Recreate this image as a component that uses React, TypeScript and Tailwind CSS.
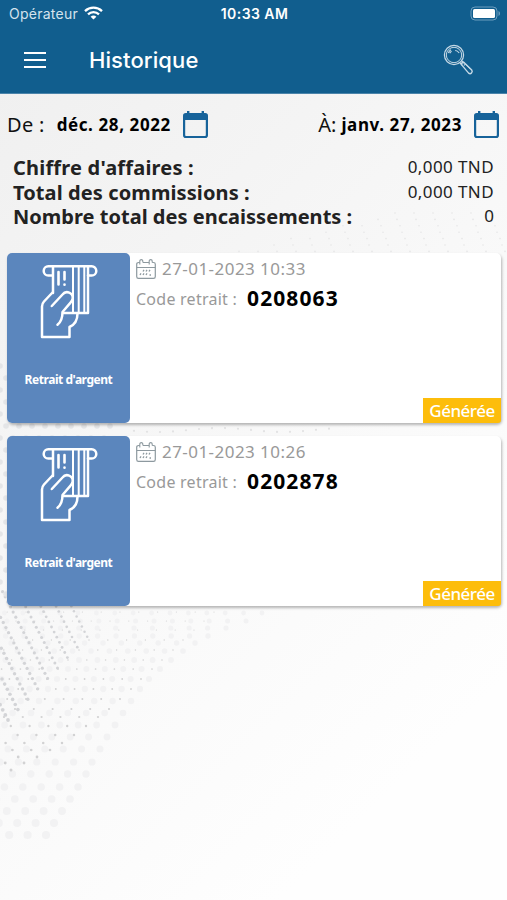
import type { ReactNode } from "react"

interface Withdrawal {
  date: string
  code: string
  status: string
}

const withdrawals: Withdrawal[] = [
  { date: "27-01-2023 10:33", code: "0208063", status: "Générée" },
  { date: "27-01-2023 10:26", code: "0202878", status: "Générée" },
]

interface Dot {
  x: number
  y: number
  r: number
  fill: string
}

// Right-hand end of every halftone row, from the bottom up
const largeEdge = [
  [46, 835], [54, 823], [62, 811], [70, 799], [78, 787], [86, 774], [92, 762],
  [100, 749], [107, 737], [115, 725], [123, 713], [131, 701], [140, 689], [149, 679],
  [160, 669], [171, 660], [183, 651], [195, 643], [208, 636], [226, 628], [246, 621], [262, 613],
]

const smallEdge = [
  [11, 770], [24, 763], [37, 757], [50, 750], [62, 743], [74, 735], [86, 726],
  [98, 717], [109, 709], [120, 699], [131, 689], [141, 679], [152, 669], [162, 660],
  [173, 650], [183, 640], [194, 630], [204, 621], [214, 612],
]

function buildDots(): Dot[] {
  const dots: Dot[] = []

  largeEdge.forEach(([edge, y], row) => {
    for (let x = edge; x > -4; x -= 18.4) {
      dots.push({ x, y, r: 4.1 - row * 0.08, fill: "#f2f2f3" })
    }
  })

  smallEdge.forEach(([edge, y], row) => {
    for (let x = edge; x > 0; x -= 18.8) {
      dots.push({ x, y, r: Math.max(0.6, 1.5 - row * 0.055), fill: "#d2d2d3" })
    }
  })

  // dense strings of dots on the left edge
  for (let line = 0; line < 9; line++) {
    const endX = 8 + line * 9.9
    const endY = 720 - line * 10.4
    for (let i = 0; i < 30; i++) {
      const x = endX - i * 2.65
      const y = endY - i * 5.1
      if (x > 0 && y > 590) {
        dots.push({ x, y, r: 1.9 - line * 0.08, fill: "#d3d4d7" })
      }
    }
  }

  // faint dots at the left of the cards
  for (let row = 0; row < 20; row++) {
    const y = 366 + row * 12
    for (let x = (row % 2) * 6; x < 128 - row * 2; x += 13) {
      dots.push({ x, y, r: 2.8, fill: "#e4e5e7" })
    }
  }

  // wave on the right, behind the totals
  for (let row = 0; row < 7; row++) {
    const y = 213 + row * 6.4
    for (let x = 395 - row * 26; x < 507; x += 19) {
      dots.push({ x: x + (row % 2) * 9, y, r: 0.8, fill: "#e6e6e7" })
    }
  }

  for (let x = 134; x < 340; x += 13) {
    dots.push({ x, y: 430 + Math.sin(x / 20) * 2, r: 1.1, fill: "#e2e2e3" })
  }

  return dots
}

const dots = buildDots()

function Backdrop() {
  return (
    <svg className="absolute inset-0 -z-10" width="507" height="900" viewBox="0 0 507 900" aria-hidden="true">
      <defs>
        <linearGradient id="page" x1="0" y1="0" x2="0.55" y2="1">
          <stop offset="0" stopColor="#efefef" />
          <stop offset="0.35" stopColor="#f4f4f4" />
          <stop offset="0.7" stopColor="#fafafa" />
          <stop offset="1" stopColor="#fefefe" />
        </linearGradient>
      </defs>
      <rect width="507" height="900" fill="url(#page)" />
      {dots.map((dot, i) => (
        <circle key={i} cx={dot.x} cy={dot.y} r={dot.r} fill={dot.fill} />
      ))}
    </svg>
  )
}

function StatusBar() {
  return (
    <div className="grid h-[26px] grid-cols-[1fr_auto_1fr] items-center pl-[9px] pr-[7px] font-['Inter',sans-serif] text-[14px] text-white">
      <div className="flex items-center gap-[6px]">
        <span className="tracking-[0.25px] text-[#d5e3ed]">Opérateur</span>
        <svg width="19" height="14" viewBox="0 0 19 14" fill="none" stroke="white" strokeWidth="2.3">
          <path d="M1 5.1C5.8.5 13.2.5 18 5.1" />
          <path d="M4 8.3c3.1-3 7.9-3 11 0" />
          <path d="M9.5 13.5 6.6 10.7c1.6-1.5 4.2-1.5 5.8 0Z" fill="white" stroke="none" />
        </svg>
      </div>
      <span className="whitespace-nowrap font-semibold tracking-[0.45px]">10:33 AM</span>
      <svg className="justify-self-end" width="30" height="15" viewBox="0 0 30 15">
        <rect x="1" y="1" width="26" height="13" rx="4" fill="none" stroke="#6d9dbe" />
        <rect x="3" y="3" width="22" height="9" rx="1.5" fill="white" />
        <path d="M28.5 5v5c2-.7 2-4.3 0-5Z" fill="#6d9dbe" />
      </svg>
    </div>
  )
}

function SearchIcon() {
  return (
    <svg width="32" height="32" viewBox="0 0 32 32" fill="none" stroke="#c6d9e6">
      <circle cx="11" cy="11" r="9.6" strokeWidth="1.2" />
      <circle cx="11" cy="11" r="7.7" strokeWidth="1" />
      <path d="M5.4 9c.4-1.4 1.3-2.500 2.600-3.200M6.800 9.200c.4-.9 1-1.500 1.800-1.900M12.200 6.500c1.600 0 3 1 4 2.500" strokeWidth="1.1" />
      <path d="m17 19 2.200 2.200M19 17l2.200 2.200" strokeWidth="1.2" />
      <path d="M18.4 20.6c0-1.500.8-2.300 2.300-2.300l8 7.700c1.500 2.100-1 4.700-3.100 3.100Z" strokeWidth="1.4" />
      <path d="M21.3 21.700c-.6-1.100.5-2 1.500-1.200l4.400 4.300" strokeWidth="1" />
    </svg>
  )
}

function CalendarIcon() {
  return (
    <svg width="25" height="27" viewBox="0 0 25 27">
      <path
        d="M4 0h2.400v2h12.200V0H21v2h1.200A2.800 2.800 0 0 1 25 4.800v19.400A2.800 2.800 0 0 1 22.200 27H2.800A2.800 2.800 0 0 1 0 24.200V4.800A2.800 2.800 0 0 1 2.800 2H4ZM2.200 9v15.200c0 .5.300.8.800.8h19c.5 0 .8-.3.800-.8V9Z"
        fill="#17639a"
        fillRule="evenodd"
      />
    </svg>
  )
}

function SmallCalendarIcon() {
  return (
    <svg width="20" height="20" viewBox="0 0 20 20" fill="none" stroke="#8d999f">
      <path
        d="M3.800 3.500H2.600C1.300 3.500.7 4.300.7 5.300v12.200c0 1.200.7 1.900 1.800 1.900h15c1.100 0 1.800-.7 1.800-1.900V5.300c0-1-.6-1.800-1.900-1.800h-1.200M7 3.500h6"
        strokeWidth="1.2"
      />
      <path d="M.7 8.500h18.600" strokeWidth="1" />
      <path d="M3.800 5.500V2c0-1.800 3-1.800 3 0v1.500M13.200 5.500V2c0-1.800 3-1.800 3 0v1.500" strokeWidth="1.1" />
      <path
        d="m7 12.500 1-1.600M10 12.500l1-1.600M13 12.500l1-1.600M4 16l1-1.600M7 16l1-1.600M10 16l1-1.600M13.500 16h1.500"
        strokeWidth="1.3"
      />
    </svg>
  )
}

// Hand pulling a bank card out of the slot
function WithdrawIcon() {
  return (
    <svg
      width="58"
      height="76"
      viewBox="0 0 58 76"
      fill="none"
      stroke="white"
      strokeWidth="2.5"
      strokeLinejoin="round"
      strokeLinecap="round"
    >
      <path d="M12.500 11.500H8.300a4.600 4.600 0 0 1 0-9.200h43.400a4.600 4.600 0 0 1 0 9.200H48" />
      <path d="M13 3v26M48 3v46H23.500" />
      <path d="M33 3v45.500M38.700 3v45.500M44.300 3v45.500" strokeWidth="2" />
      <path d="M18.500 8v12.500M24.500 8v7.500M24.500 20.500v.2" strokeWidth="2.6" />
      <path d="M11.800 42 22.500 30.500c3.500-4.600 10.800-1.800 10.200 4-.2 1.700-1 3-2.400 4.400L22.500 48c0 5-.8 9.500-5 12.700" />
      <path d="M12.500 28.500 4 37.500c-1.600 1.700-2 3-2 5V73h27.500V63c5.800-2.500 8-7.800 8-13.500" />
    </svg>
  )
}

function DatePicker({ label, date }: { label: ReactNode; date: string }) {
  return (
    <button className="flex items-center">
      <span className="text-[20px] text-[#111]">{label}</span>
      <span className="whitespace-nowrap text-[17px] font-bold tracking-[0.6px] text-black">{date}</span>
      <span className="ml-3">
        <CalendarIcon />
      </span>
    </button>
  )
}

function Totals() {
  return (
    <dl className="mt-[16px] grid grid-cols-[1fr_auto] px-[13px] leading-[24.5px] text-[#222]">
      <dt className="text-[20px] font-bold tracking-[0.2px]">Chiffre d'affaires :</dt>
      <dd className="-mt-px text-right text-[17px] tracking-[0.4px]">0,000 TND</dd>
      <dt className="text-[20px] font-bold tracking-[0.1px]">Total des commissions :</dt>
      <dd className="-mt-px text-right text-[17px] tracking-[0.4px]">0,000 TND</dd>
      <dt className="text-[20px] font-bold tracking-[0.02px]">Nombre total des encaissements :</dt>
      <dd className="-mt-px text-right text-[17px]">0</dd>
    </dl>
  )
}

function WithdrawalCard({ item }: { item: Withdrawal }) {
  return (
    <article className="relative flex h-[170.5px] rounded-[5px] bg-white shadow-[1px_2px_3px_rgba(0,0,0,0.28)]">
      <div className="flex w-[123px] flex-col items-center rounded-[5px] bg-[#5b86bd] pt-[11px]">
        <WithdrawIcon />
        <span className="mt-[30px] whitespace-nowrap text-[12px] font-bold leading-5 tracking-[-0.45px] text-white">
          Retrait d'argent
        </span>
      </div>
      <div className="flex-1 pl-[6px] pt-[5px]">
        <div className="flex h-[22px] items-center gap-[6px] text-[17px] tracking-[0.45px] text-[#999]">
          <SmallCalendarIcon />
          <span>{item.date}</span>
        </div>
        <div className="mt-[7px] flex h-6 items-center text-[16px] text-[#999]">
          <span className="tracking-[0.25px]">Code retrait :</span>
          <span className="ml-[10px] text-[21px] font-bold tracking-[1.1px] text-black">{item.code}</span>
        </div>
      </div>
      <span className="absolute bottom-0 right-0 flex h-[25px] w-[78px] items-center justify-center rounded-br-[3px] bg-[#fdbd0b] text-[17px] font-medium tracking-[-0.5px] text-white">
        {item.status}
      </span>
    </article>
  )
}

export default function App() {
  return (
    <div className="relative isolate h-[900px] w-[507px] overflow-hidden font-['Noto_Sans',sans-serif]">
      <Backdrop />
      <header className="h-[94px] border-b border-[#4b84aa] bg-[#115e8e]">
        <StatusBar />
        <div className="flex h-[67px] items-center pl-6 pr-8">
          <button className="flex w-[22px] flex-col gap-[5px] pt-px" aria-label="Menu">
            <span className="h-[2px] bg-white" />
            <span className="h-[2px] bg-white" />
            <span className="h-[2px] bg-white" />
          </button>
          <h1 className="ml-[43px] flex-1 pt-px font-['Inter',sans-serif] text-[22px] font-medium tracking-[0.1px] text-white">
            Historique
          </h1>
          <button aria-label="Rechercher">
            <SearchIcon />
          </button>
        </div>
      </header>
      <main>
        <div className="mt-[15px] flex h-[31px] items-center justify-between pl-[7px] pr-2">
          <DatePicker label={<span className="mr-3 tracking-[0.3px]">De :</span>} date="déc. 28, 2022" />
          <DatePicker label={<span className="mr-[5px]">À:</span>} date="janv. 27, 2023" />
        </div>
        <Totals />
        <section className="mt-[23px] flex flex-col gap-[12.5px] pl-[7px] pr-[6px]">
          {withdrawals.map((item) => (
            <WithdrawalCard key={item.code} item={item} />
          ))}
        </section>
      </main>
    </div>
  )
}
